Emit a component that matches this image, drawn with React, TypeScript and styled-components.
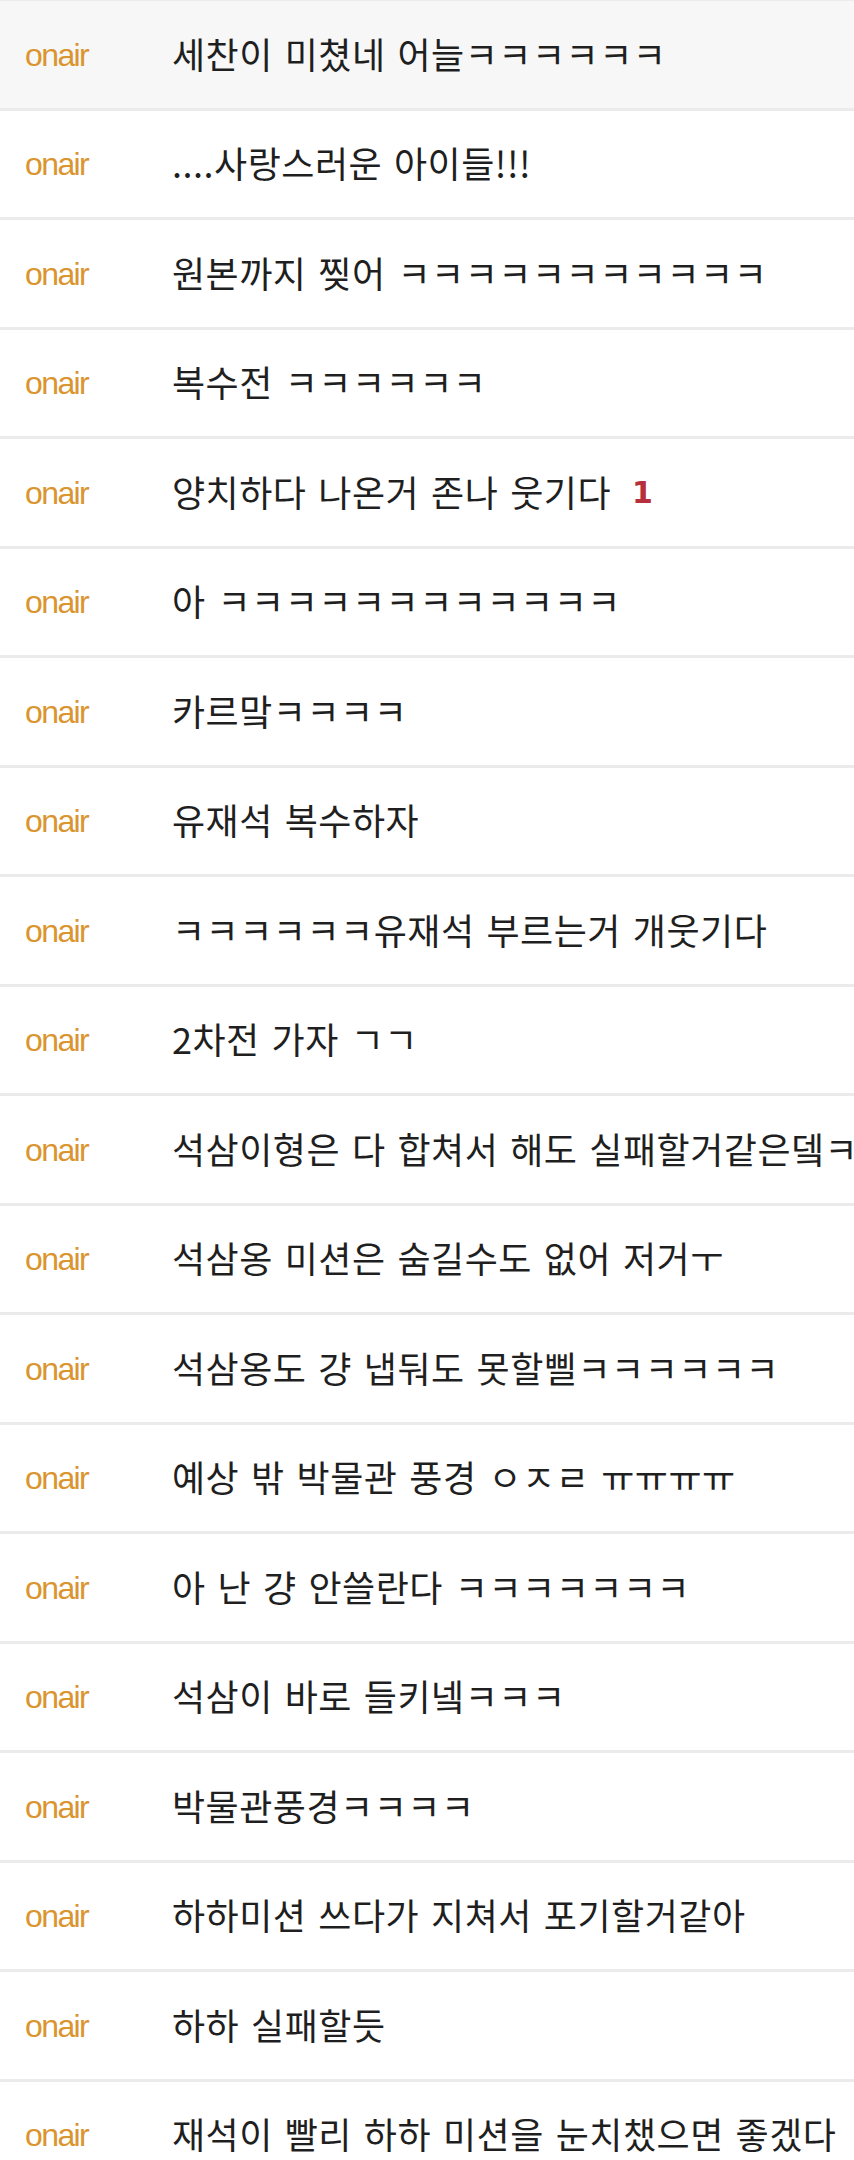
import React from "react";
import styled, { createGlobalStyle } from "styled-components";

const GlobalStyle = createGlobalStyle`
  html, body {
    margin: 0;
    padding: 0;
    background: #ffffff;
  }
  body {
    font-family: "Noto Sans CJK KR", "Noto Sans", sans-serif;
    overflow-x: hidden;
  }
`;

const List = styled.ul`
  list-style: none;
  margin: 0;
  padding: 0;
  width: 854px;
  border-top: 1px solid #ececec;
  overflow: hidden;
`;

const Row = styled.li<{ $active?: boolean }>`
  display: grid;
  grid-template-columns: 147px 1fr;
  align-items: center;
  box-sizing: border-box;
  height: 109.5px;
  padding-left: 25px;
  border-bottom: 3px solid #ebebeb;
  background: ${(p) => (p.$active ? "#f7f7f7" : "#ffffff")};
  overflow: hidden;
`;

const Source = styled.span`
  font-family: "Liberation Sans", Arial, sans-serif;
  font-size: 32px;
  letter-spacing: -1.6px;
  color: #da952f;
  line-height: 1.3;
  padding-top: 3px;
`;

const Message = styled.span`
  display: flex;
  align-items: center;
  white-space: pre;
  overflow: hidden;
  font-family: "Noto Sans CJK KR", sans-serif;
  font-size: 36px;
  color: #1f1f1f;
  line-height: 1.4;
  letter-spacing: 0.5px;
  word-spacing: 3.3px;
  margin-top: -3px;
`;

const Count = styled.span`
  margin-left: 21px;
  font-family: "DejaVu Sans", sans-serif;
  font-weight: bold;
  font-size: 30px;
  letter-spacing: 0;
  color: #b5303c;
  line-height: 1.2;
  padding-top: 4px;
`;

const items: { text: string; count?: number }[] = [
  { text: "세찬이 미쳤네 어늘ㅋㅋㅋㅋㅋㅋ" },
  { text: "....사랑스러운 아이들!!!" },
  { text: "원본까지 찢어 ㅋㅋㅋㅋㅋㅋㅋㅋㅋㅋㅋ" },
  { text: "복수전 ㅋㅋㅋㅋㅋㅋ" },
  { text: "양치하다 나온거 존나 웃기다", count: 1 },
  { text: "아 ㅋㅋㅋㅋㅋㅋㅋㅋㅋㅋㅋㅋ" },
  { text: "카르맠ㅋㅋㅋㅋ" },
  { text: "유재석 복수하자" },
  { text: "ㅋㅋㅋㅋㅋㅋ유재석 부르는거 개웃기다" },
  { text: "2차전 가자 ㄱㄱ" },
  { text: "석삼이형은 다 합쳐서 해도 실패할거같은뎈ㅋ" },
  { text: "석삼옹 미션은 숨길수도 없어 저거ㅜ" },
  { text: "석삼옹도 걍 냅둬도 못할삘ㅋㅋㅋㅋㅋㅋ" },
  { text: "예상 밖 박물관 풍경 ㅇㅈㄹ ㅠㅠㅠㅠ" },
  { text: "아 난 걍 안쓸란다 ㅋㅋㅋㅋㅋㅋㅋ" },
  { text: "석삼이 바로 들키넼ㅋㅋㅋ" },
  { text: "박물관풍경ㅋㅋㅋㅋ" },
  { text: "하하미션 쓰다가 지쳐서 포기할거같아" },
  { text: "하하 실패할듯" },
  { text: "재석이 빨리 하하 미션을 눈치챘으면 좋겠다" },
];

export default function App() {
  return (
    <>
      <GlobalStyle />
      <List>
        {items.map((item, i) => (
          <Row key={i} $active={i === 0}>
            <Source>onair</Source>
            <Message>
              {item.text}
              {item.count !== undefined && <Count>{item.count}</Count>}
            </Message>
          </Row>
        ))}
      </List>
    </>
  );
}
